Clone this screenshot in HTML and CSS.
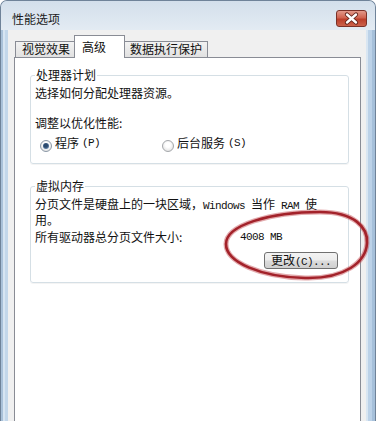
FILE: index.html
```html
<!DOCTYPE html>
<html lang="zh-CN">
<head>
<meta charset="utf-8">
<title>性能选项</title>
<link rel="stylesheet" href="styles.css">
</head>
<body>
<div class="window">
  <div class="titlebar">
    <span class="title">性能选项</span>
    <div class="close">
      <svg width="31" height="17" viewBox="0 0 31 17">
        <path d="M11 4.5 L20 12.5 M20 4.5 L11 12.5" stroke="#5b2019" stroke-width="4.2" stroke-linecap="round"/>
        <path d="M11 4.5 L20 12.5 M20 4.5 L11 12.5" stroke="#ffffff" stroke-width="2.4" stroke-linecap="round"/>
      </svg>
    </div>
  </div>
  <div class="client">
    <div class="tabs">
      <div class="tab t1">视觉效果</div>
      <div class="tab active">高级</div>
      <div class="tab t3">数据执行保护</div>
    </div>
    <div class="panel">
      <fieldset class="group g1">
        <legend>处理器计划</legend>
        <p class="line">选择如何分配处理器资源。</p>
        <p class="line sub">调整以优化性能:</p>
        <div class="radios">
          <label class="radio first"><span class="dot checked"></span>程序<span class="lat">(P)</span></label>
          <label class="radio"><span class="dot"></span>后台服务<span class="lat">(S)</span></label>
        </div>
      </fieldset>
      <fieldset class="group g2">
        <legend>虚拟内存</legend>
        <p class="para">分页文件是硬盘上的一块区域，<span class="lat">Windows </span>当作<span class="lat"> RAM </span>使<br>用。</p>
        <div class="size"><span class="size-label">所有驱动器总分页文件大小:</span><span class="lat">4008 MB</span></div>
        <div class="btnrow"><button class="btn">更改<span class="lat">(C)...</span></button></div>
      </fieldset>
    </div>
  </div>
  <svg class="mark" width="158" height="84" viewBox="0 0 158 84">
    <defs><filter id="soft"><feGaussianBlur stdDeviation="0.6"/></filter></defs>
    <path d="M8 40 C8 21 52 8 102 8 C137 8 150 24 149 39 C148 58 127 75 87 74 C42 73 8 58 8 40 Z" fill="none" stroke="#c2474d" stroke-width="5" opacity="0.45" filter="url(#soft)"/>
    <path d="M8 40 C8 21 52 8 102 8 C137 8 150 24 149 39 C148 58 127 75 87 74 C42 73 8 58 8 40 Z" fill="none" stroke="#a3222a" stroke-width="2.6" filter="url(#soft)"/>
  </svg>
</div>
</body>
</html>
```

FILE: styles.css
```css
html, body {
  margin: 0;
  padding: 0;
}
body {
  width: 376px;
  height: 421px;
  overflow: hidden;
  background: #ffffff;
  font-family: "Noto Sans CJK SC", "Noto Sans", sans-serif;
  font-size: 12px;
  color: #111111;
}
.window {
  position: relative;
  width: 376px;
  height: 440px;
  box-sizing: border-box;
  border: 1px solid #6f8399;
  border-bottom: 0;
  border-radius: 7px 7px 0 0;
  display: flex;
  flex-direction: column;
  overflow: hidden;
  background: linear-gradient(90deg,
    #a9c1d9 0 2px, #d7e5f2 2px 4px, #c3d7ea 4px 7px,
    #f0f0f0 7px calc(100% - 9px),
    #d9e6f2 calc(100% - 9px) calc(100% - 7px),
    #bcd2e8 calc(100% - 7px) calc(100% - 3px),
    #a6c0da calc(100% - 3px));
}
.titlebar {
  height: 29px;
  flex: none;
  display: flex;
  justify-content: space-between;
  align-items: flex-start;
  padding: 0 8px 0 11px;
  background: linear-gradient(#d3dfeb, #e3ebf3);
}
.title {
  margin-top: 11px;
  line-height: 14px;
  color: #1b1b1b;
}
.close {
  margin-top: 9px;
  width: 31px;
  height: 17px;
  box-sizing: border-box;
  border: 1px solid #7a3128;
  border-radius: 3px;
  background: linear-gradient(#e2998a 0%, #d06350 45%, #bb3f2b 55%, #cc624b 100%);
  display: flex;
  align-items: center;
  justify-content: center;
  overflow: hidden;
}
.close svg {
  display: block;
  margin: -1px;
}
.client {
  flex: 1;
  margin: 0 9px 0 7px;
  background: #f0f0f0;
  padding: 5px 5px 0 6px;
  display: flex;
  flex-direction: column;
}
.tabs {
  height: 23px;
  display: flex;
  align-items: flex-end;
  padding-left: 1px;
  margin-bottom: -1px;
  position: relative;
  z-index: 1;
}
.tab {
  box-sizing: border-box;
  height: 16px;
  margin-bottom: 1px;
  border: 1px solid #898c95;
  border-bottom: 0;
  background: linear-gradient(#f2f2f2, #e1e1e1);
  line-height: 14px;
  white-space: nowrap;
  color: #111111;
}
.t1 {
  width: 59px;
  padding-left: 6px;
  border-right: 0;
}
.t3 {
  width: 84px;
  padding-left: 5px;
  margin-left: -1px;
}
.tab.active {
  width: 51px;
  height: 23px;
  margin-bottom: 0;
  padding: 4px 0 0 7px;
  background: #ffffff;
  position: relative;
  z-index: 2;
}
.panel {
  flex: 1;
  border: 1px solid #898c95;
  background: #ffffff;
  padding: 10px 11px 0 15px;
}
.group {
  margin: 0;
  padding: 4px 4px 11px;
  border: 1px solid #d5dfe5;
  border-radius: 3px;
  box-shadow: 0 1px 0 #f4f4f4;
  min-width: 0;
}
.group legend {
  padding: 0 1px;
  line-height: 14px;
}
.line {
  margin: 0;
  line-height: 14px;
}
.sub {
  margin-top: 16px;
}
.radios {
  margin-top: 6px;
  display: flex;
  padding-left: 5px;
  line-height: 14px;
}
.radio {
  display: flex;
  align-items: flex-start;
  gap: 3px;
}
.radio.first {
  width: 122px;
}
.dot {
  margin-top: 4px;
  width: 12px;
  height: 12px;
  box-sizing: border-box;
  border-radius: 50%;
  border: 1px solid #a4a7ab;
  background: radial-gradient(circle at 50% 40%, #ffffff 0 30%, #e3e3e3 80%);
  position: relative;
}
.dot.checked {
  border-color: #8b98a6;
}
.dot.checked::after {
  content: "";
  position: absolute;
  left: 2px;
  top: 2px;
  width: 6px;
  height: 6px;
  border-radius: 50%;
  background: radial-gradient(circle at 45% 40%, #2b4a6e 0 35%, #5d7ea3 70%, #9eb6cf 100%);
}
.lat {
  font-family: "Liberation Mono", monospace;
  font-size: 11px;
  letter-spacing: -0.6px;
  white-space: pre;
}
.g2 {
  margin-top: 15px;
  padding: 4px 4px 13px;
}
.para {
  margin: 0;
  line-height: 13px;
}
.size {
  margin-top: 4px;
  line-height: 14px;
  display: flex;
}
.size-label {
  width: 205px;
}
.btnrow {
  margin-top: 8px;
  display: flex;
  justify-content: flex-end;
  padding-right: 6px;
}
.btn {
  width: 74px;
  height: 17px;
  box-sizing: border-box;
  padding: 0;
  border: 1px solid #707070;
  border-radius: 3px;
  background: linear-gradient(#f3f3f3 0%, #ececec 48%, #dcdcdc 52%, #cfcfcf 100%);
  font-family: "Noto Sans CJK SC", sans-serif;
  font-size: 12px;
  line-height: 14px;
  color: #111111;
}
.mark {
  position: absolute;
  left: 217px;
  top: 203px;
  pointer-events: none;
}
```
